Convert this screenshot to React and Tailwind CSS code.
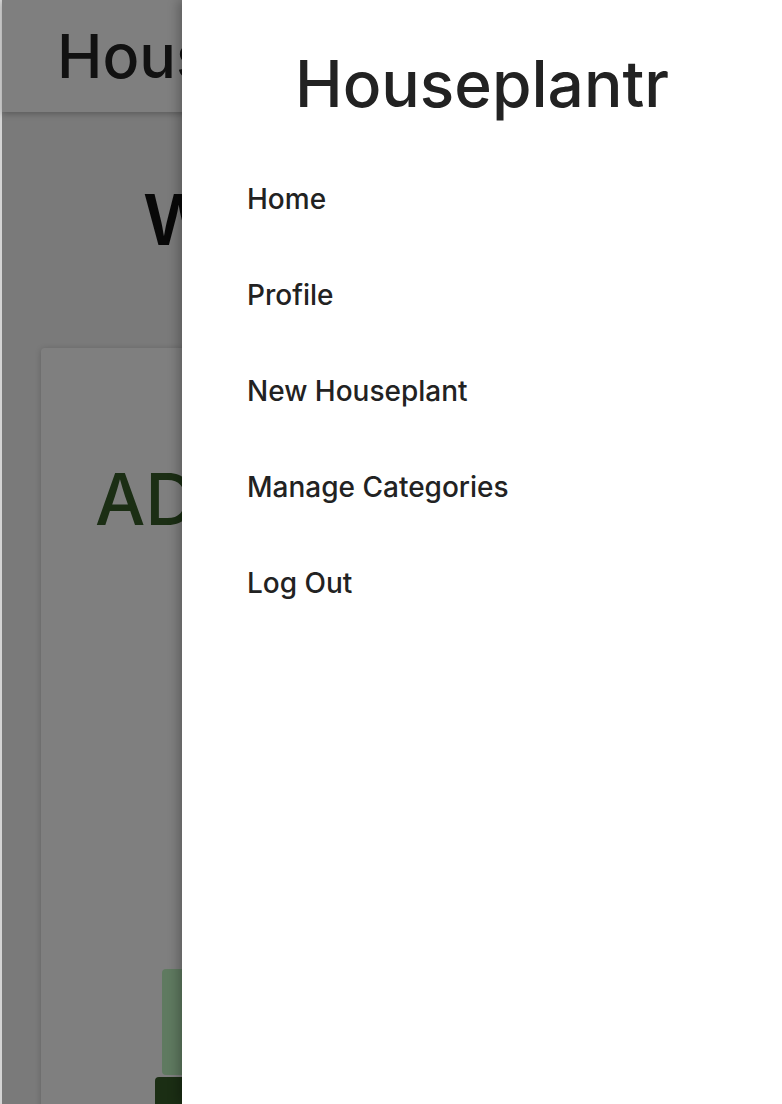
import { useState } from 'react'

const LINKS = ['Home', 'Profile', 'New Houseplant', 'Manage Categories', 'Log Out']

export default function App() {
  const [open, setOpen] = useState(true)

  return <div className="relative h-[1104px] w-[782px] overflow-hidden bg-[#d4d4d4] font-['Inter','Noto_Sans',sans-serif] text-[#222]">
    {/* page underneath */}
    <div className="ml-[2px] h-full bg-[#f4f4f4]">
      <header className="h-[112px] bg-white shadow-[0_2px_6px_rgba(0,0,0,0.25)] flex items-center pl-[55px]">
        <span className="text-[61px] leading-none font-medium">Houseplantr</span>
      </header>
      <h1 className="pt-[68px] pl-[141px] text-[70px] leading-[80px] font-semibold text-[#111] whitespace-nowrap">Welcome back</h1>
      <div className="mt-[88px] ml-[39px] mr-[39px] h-[900px] bg-white rounded-[4px] shadow-[0_1px_6px_rgba(0,0,0,0.2)] pt-[111px] pl-[54px]">
        <h2 className="text-[71px] leading-[80px] font-medium text-[#365c28] whitespace-nowrap">ADD A HOUSEPLANT</h2>
        <div className="mt-[430px] ml-[67px] w-[400px] h-[106px] rounded-[4px] bg-[#bff4c1]" />
        <div className="mt-[2px] ml-[60px] w-[300px] h-[60px] rounded-[4px] bg-[#365c28]" />
      </div>
    </div>

    {/* overlay + drawer */}
    {open && <>
      <div className="absolute top-0 bottom-0 left-[2px] right-0 bg-black/50" onClick={()=>setOpen(false)} />
      <nav className="absolute top-0 right-0 bottom-0 w-[600px] bg-white shadow-[-4px_0_10px_rgba(0,0,0,0.25)]">
        <h2 className="pt-[46px] text-center text-[64px] leading-[76px] font-medium">Houseplantr</h2>
        <ul className="mt-[61px] pl-[65px]">
          {LINKS.map(l => <li key={l} className="h-[96px] text-[28px] leading-[32px] font-medium">{l}</li>)}
        </ul>
      </nav>
    </>}
  </div>
}
